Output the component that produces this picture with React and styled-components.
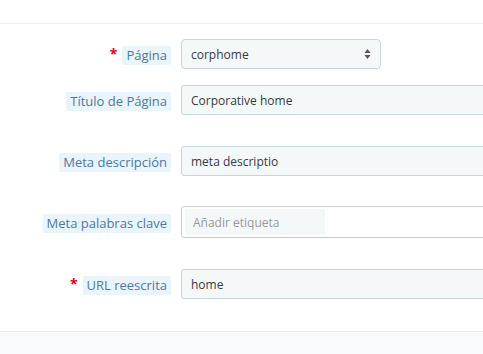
import React from 'react';
import styled, { createGlobalStyle } from 'styled-components';

const GlobalStyle = createGlobalStyle`
  html, body {
    margin: 0;
    padding: 0;
    background: #fff;
    overflow: hidden;
  }
  body {
    font-family: "Open Sans", "Liberation Sans", sans-serif;
    font-size: 13px;
    color: #363a41;
  }
`;

const Page = styled.div`
  width: 483px;
  height: 354px;
  display: flex;
  flex-direction: column;
  overflow: hidden;
`;

const TopBar = styled.div`
  height: 23px;
  border-bottom: 1px solid #eeeeee;
  flex-shrink: 0;
`;

const Form = styled.div`
  padding-top: 15px;
  display: flex;
  flex-direction: column;
`;

const Row = styled.div`
  display: grid;
  grid-template-columns: 171px 600px;
  column-gap: 10px;
  align-items: center;
  height: ${(p) => p.$height || 30}px;
  margin-bottom: ${(p) => p.$gap}px;
`;

const LabelCell = styled.div`
  display: flex;
  justify-content: flex-end;
  align-items: center;
  gap: 5px;
  padding-top: 2px;
`;

const Required = styled.span`
  color: #e2001a;
  font-size: 14px;
  font-weight: 700;
  line-height: 1;
  margin-top: -2px;
`;

const Label = styled.span`
  background: #eaf4fb;
  color: #4a7aa5;
  padding: 0 4px;
  height: 19px;
  line-height: 19px;
  border-radius: 2px;
  white-space: nowrap;
`;

const Field = styled.div`
  box-sizing: border-box;
  height: 30px;
  width: ${(p) => p.$width || 600}px;
  background: #f5f8f9;
  border: 1px solid #c7d6db;
  border-radius: ${(p) => (p.$rounded ? '4px' : '3px')};
  padding: 0 9px;
  display: flex;
  align-items: center;
  justify-content: space-between;
  font-size: 12px;
  color: #363a41;
`;

const TagField = styled.div`
  box-sizing: border-box;
  height: 32px;
  width: 600px;
  background: #fff;
  border: 1px solid #cccccc;
  border-radius: 3px;
  padding: 2px 3px;
  display: flex;
  align-items: stretch;
`;

const TagInput = styled.div`
  box-sizing: border-box;
  width: 140px;
  background: #f5f8f9;
  color: #999999;
  font-size: 12px;
  padding: 0 8px;
  display: flex;
  align-items: center;
  border-radius: 2px;
`;

const Footer = styled.div`
  margin-top: auto;
  height: 22px;
  border-top: 1px solid #eeeeee;
  background: #fafbfc;
`;

const SelectArrows = () => (
  <svg width="7" height="12" viewBox="0 0 7 12">
    <path d="M3.5 1 L6.5 5 H0.5 Z" fill="#555" />
    <path d="M3.5 11 L6.5 7 H0.5 Z" fill="#555" />
  </svg>
);

const App = () => (
  <>
    <GlobalStyle />
    <Page>
      <TopBar />
      <Form>
        <Row $gap={16}>
          <LabelCell>
            <Required>*</Required>
            <Label>Página</Label>
          </LabelCell>
          <Field $width={200} $rounded>
            <span>corphome</span>
            <SelectArrows />
          </Field>
        </Row>
        <Row $gap={31}>
          <LabelCell>
            <Label>Título de Página</Label>
          </LabelCell>
          <Field>Corporative home</Field>
        </Row>
        <Row $gap={30}>
          <LabelCell>
            <Label>Meta descripción</Label>
          </LabelCell>
          <Field>meta descriptio</Field>
        </Row>
        <Row $height={32} $gap={31}>
          <LabelCell>
            <Label>Meta palabras clave</Label>
          </LabelCell>
          <TagField>
            <TagInput>Añadir etiqueta</TagInput>
          </TagField>
        </Row>
        <Row $gap={0}>
          <LabelCell>
            <Required>*</Required>
            <Label>URL reescrita</Label>
          </LabelCell>
          <Field>home</Field>
        </Row>
      </Form>
      <Footer />
    </Page>
  </>
);

export default App;
